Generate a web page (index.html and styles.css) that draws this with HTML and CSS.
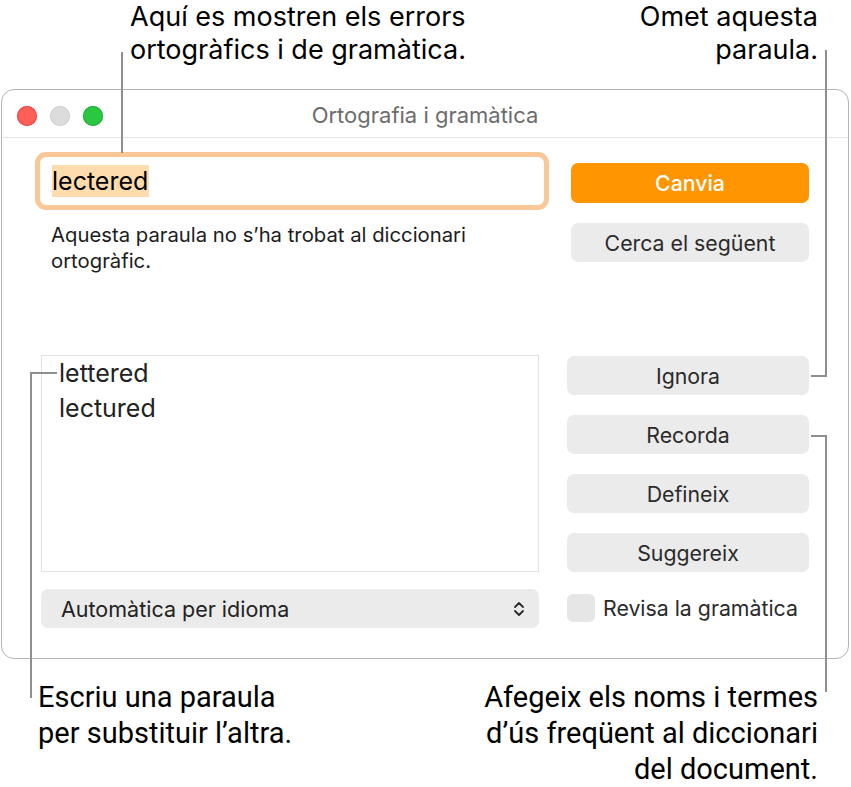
FILE: index.html
```html
<!DOCTYPE html>
<html lang="ca">
<head>
<meta charset="utf-8">
<title>Ortografia i gramàtica</title>
<link rel="stylesheet" href="styles.css">
</head>
<body>
<div class="page">
  <div class="notes-top">
    <p class="note note-tl">Aquí es mostren els errors<br>ortogràfics i de gramàtica.</p>
    <p class="note note-tr">Omet aquesta<br>paraula.</p>
  </div>

  <div class="window">
    <div class="titlebar">
      <div class="lights">
        <span class="light red"></span>
        <span class="light grey"></span>
        <span class="light green"></span>
      </div>
      <div class="title">Ortografia i gramàtica</div>
      <div></div>
    </div>
    <div class="content">
      <div class="col-left">
        <div class="field"><span class="sel">lectered</span></div>
        <p class="message">Aquesta paraula no s’ha trobat al diccionari<br>ortogràfic.</p>
        <div class="list">
          <div class="item">lettered</div>
          <div class="item">lectured</div>
        </div>
        <div class="popup">
          <span>Automàtica per idioma</span>
          <svg class="chev" width="12" height="18" viewBox="0 0 12 18"><path d="M2 7 L6 3 L10 7 M2 11 L6 15 L10 11" fill="none" stroke="#2a2a2a" stroke-width="1.8" stroke-linecap="round" stroke-linejoin="round"/></svg>
        </div>
      </div>
      <div class="col-right">
        <div class="btn btn-primary btn-top">Canvia</div>
        <div class="btn btn-top btn-next">Cerca el següent</div>
        <div class="btn btn-ignore">Ignora</div>
        <div class="btn btn-stack">Recorda</div>
        <div class="btn btn-stack">Defineix</div>
        <div class="btn btn-stack">Suggereix</div>
        <label class="check-row"><span class="check"></span><span>Revisa la gramàtica</span></label>
      </div>
    </div>
  </div>

  <div class="notes-bottom">
    <p class="note note-bl">Escriu una paraula<br>per substituir l’altra.</p>
    <p class="note note-br">Afegeix els noms i termes<br>d’ús freqüent al diccionari<br>del document.</p>
  </div>

  <div class="line line-tl"></div>
  <div class="line line-tr-v"></div>
  <div class="line line-tr-h"></div>
  <div class="line line-br-v"></div>
  <div class="line line-br-h"></div>
  <div class="line line-bl-v"></div>
  <div class="line line-bl-h"></div>
</div>
</body>
</html>
```

FILE: styles.css
```css
* { box-sizing: border-box; }
html, body { margin: 0; padding: 0; background: #fff; }
body { font-family: Inter, "Noto Sans", sans-serif; color: #111; }

.page { position: relative; width: 851px; height: 787px; overflow: hidden; }

p { margin: 0; }

.notes-top { display: flex; justify-content: space-between; height: 89px; }
.note { font-size: 27px; line-height: 33px; color: #000; }
.note-tl { padding-left: 130px; }
.note-tr { padding-right: 33px; text-align: right; }

.window {
  margin-left: 1px;
  width: 848px;
  height: 570px;
  border: 1px solid #b4b4b4;
  border-radius: 13px;
  background: #fff;
}

.titlebar {
  height: 48px;
  border-bottom: 1px solid #e3e3e3;
  display: grid;
  grid-template-columns: 1fr auto 1fr;
  align-items: center;
}
.lights { display: flex; gap: 13px; padding-left: 15px; padding-top: 5px; }
.light { width: 20px; height: 20px; border-radius: 50%; display: block; }
.red { background: #ff5f57; box-shadow: inset 0 0 0 1px #e5484a; }
.grey { background: #dcdcdc; box-shadow: inset 0 0 0 1px #cfcfcf; }
.green { background: #2ac840; box-shadow: inset 0 0 0 1px #20ad35; }
.title { font-size: 22px; color: #6c6c6c; padding-top: 2px; }

.content { display: flex; gap: 28px; padding: 14px 39px 0 39px; }

.col-left { width: 498px; display: flex; flex-direction: column; }
.field {
  margin-left: -6px;
  width: 514px;
  height: 58px;
  border: 5px solid #f9c896;
  border-radius: 11px;
  background: #fff;
  display: flex;
  align-items: center;
  padding-left: 12px;
}
.sel {
  display: inline-block;
  background: #ffdcae;
  font-size: 25px;
  line-height: 32px;
  color: #000;
  padding-right: 1px;
}
.message { margin-top: 12px; padding-left: 10px; font-size: 20.3px; line-height: 26px; color: #1c1c1c; }
.list {
  margin-top: 81px;
  height: 217px;
  border: 1px solid #e2e2e2;
  padding-left: 17px;
}
.item { font-size: 25px; line-height: 35px; color: #222; }
.popup {
  margin-top: 17px;
  height: 39px;
  background: #ebebeb;
  border-radius: 7px;
  display: flex;
  align-items: center;
  justify-content: space-between;
  padding: 0 14px 0 20px;
  font-size: 21.5px;
  color: #222;
}

.col-right { width: 242px; display: flex; flex-direction: column; }
.btn {
  height: 39px;
  border-radius: 7px;
  background: #ebebeb;
  display: flex;
  align-items: center;
  justify-content: center;
  font-size: 21.3px;
  color: #2a2a2a;
}
.btn-top { margin-left: 4px; }
.btn-primary { margin-top: 11px; height: 40px; background: #ff9500; color: #fff; font-weight: 500; }
.btn-next { margin-top: 20px; }
.btn-ignore { margin-top: 94px; }
.btn-stack { margin-top: 20px; }
.check-row { margin-top: 22px; display: flex; align-items: center; gap: 8px; font-size: 21.3px; color: #2a2a2a; }
.check { width: 28px; height: 28px; border-radius: 6px; background: #e6e6e6; display: block; }

.notes-bottom { display: flex; justify-content: space-between; margin-top: 20px; padding: 0 33px 0 38px; }
.note-bl, .note-br { font-family: Roboto, "Noto Sans", sans-serif; font-size: 29px; line-height: 36px; }
.note-br { text-align: right; }

.line { position: absolute; background: #8e8e8e; }
.line-tl { left: 121px; top: 52px; width: 2px; height: 101px; }
.line-tr-v { left: 825px; top: 50px; width: 2px; height: 327px; }
.line-tr-h { left: 811px; top: 375px; width: 16px; height: 2px; }
.line-br-v { left: 825px; top: 435px; width: 2px; height: 257px; }
.line-br-h { left: 811px; top: 435px; width: 16px; height: 2px; }
.line-bl-v { left: 30px; top: 372px; width: 2px; height: 326px; }
.line-bl-h { left: 30px; top: 372px; width: 27px; height: 2px; }
```
